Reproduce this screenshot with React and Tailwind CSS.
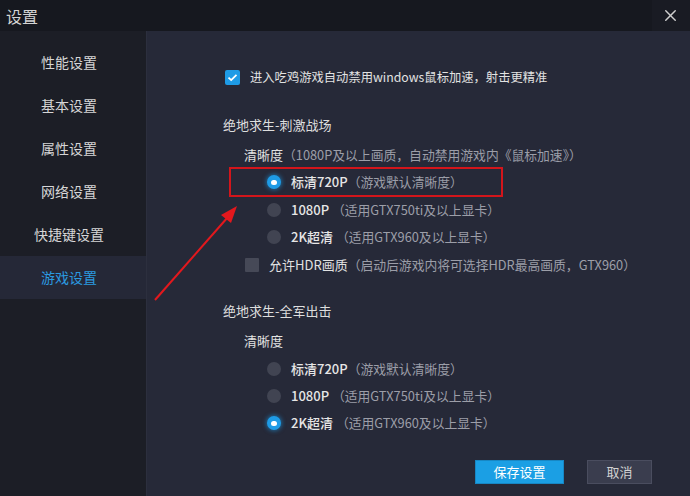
import React from "react";
import { X } from "lucide-react";

const font = { fontFamily: '"Noto Sans CJK SC", "Noto Sans", sans-serif' };

function Radio({ checked }) {
  if (checked) {
    return (
      <span className="w-[14px] h-[14px] rounded-full bg-[#1e9be6] flex items-center justify-center shadow-[0_0_4px_1px_rgba(30,155,230,0.55)] shrink-0">
        <span className="w-[6px] h-[5px] rounded-full bg-white" />
      </span>
    );
  }
  return <span className="w-[14px] h-[14px] rounded-full bg-[#414452] shrink-0" />;
}

function RadioRow({ checked, label, note, mt }) {
  return (
    <div className={`h-[20px] flex items-center pl-[44px] ${mt}`}>
      <Radio checked={checked} />
      <span className="ml-[10px] text-[13px] text-[#e6e6e6] font-medium">{label}</span>
      <span className="text-[12.8px] text-[#9c9ea8] whitespace-pre">{note}</span>
    </div>
  );
}

const SIDE = ["性能设置", "基本设置", "属性设置", "网络设置", "快捷键设置", "游戏设置"];

export default function App() {
  return (
    <div style={font} className="w-[690px] h-[496px] flex flex-col bg-[#262938] overflow-hidden relative">
      {/* title bar */}
      <div className="h-[31px] bg-[#16181f] flex items-center justify-between shrink-0">
        <span className="pl-[6px] text-[16px] text-[#d4d4d4]">设置</span>
        <div className="h-[31px] w-[38px] flex items-center justify-center bg-[#191b23] pr-[2px]">
          <X size={19} strokeWidth={1.8} color="#cfcfcf" />
        </div>
      </div>
      <div className="flex flex-1">
        {/* sidebar */}
        <div className="w-[146px] bg-[#1c1e26] pt-[10px] shrink-0">
          {SIDE.map((s, i) => (
            <div
              key={s}
              className={
                i === 5
                  ? "h-[43px] flex items-center justify-center pr-[8px] text-[14px] text-[#2b9ae0] bg-[#252837]"
                  : "h-[43px] flex items-center justify-center pr-[8px] text-[14px] text-[#d6d6d6]"
              }
            >
              {s}
            </div>
          ))}
        </div>
        {/* content */}
        <div className="flex-1 relative pl-[76px] border-l border-[#2c2f3e]">
          <div className="h-[20px] mt-[36px] flex items-center pl-[2px]">
            <span className="w-[15px] h-[15px] bg-[#1e9be6] rounded-[2px] flex items-center justify-center">
              <svg width="11" height="9" viewBox="0 0 11 9">
                <path d="M1.5 4.6 L4.2 7.1 L9.5 1.8" fill="none" stroke="white" strokeWidth="1.8" />
              </svg>
            </span>
            <span className="ml-[10px] text-[12.3px] text-[#e2e2e2]">进入吃鸡游戏自动禁用windows鼠标加速，射击更精准</span>
          </div>

          <div className="h-[20px] mt-[28px] flex items-center text-[13px] text-[#dedede]">绝地求生-刺激战场</div>
          <div className="h-[20px] mt-[10px] flex items-center pl-[21px]">
            <span className="text-[13px] text-[#e2e2e2]">清晰度</span>
            <span className="text-[12.8px] text-[#9c9ea8]">（1080P及以上画质，自动禁用游戏内《鼠标加速》）</span>
          </div>
          <RadioRow mt="mt-[7px]" checked label="标清720P" note="（游戏默认清晰度）" />
          <RadioRow mt="mt-[8px]" label="1080P" note=" （适用GTX750ti及以上显卡）" />
          <RadioRow mt="mt-[7px]" label="2K超清" note=" （适用GTX960及以上显卡）" />
          <div className="h-[20px] mt-[8px] flex items-center pl-[22px]">
            <span className="w-[14px] h-[14px] bg-[#464957] rounded-[1px] shrink-0" />
            <span className="ml-[10px] text-[13px] text-[#e2e2e2]">允许HDR画质</span>
            <span className="text-[12.8px] text-[#9c9ea8]">（启动后游戏内将可选择HDR最高画质，GTX960）</span>
          </div>

          <div className="h-[20px] mt-[26px] flex items-center text-[13px] text-[#dedede]">绝地求生-全军出击</div>
          <div className="h-[20px] mt-[10px] flex items-center pl-[21px]">
            <span className="text-[13px] text-[#e2e2e2]">清晰度</span>
          </div>
          <RadioRow mt="mt-[8px]" label="标清720P" note="（游戏默认清晰度）" />
          <RadioRow mt="mt-[7px]" label="1080P" note=" （适用GTX750ti及以上显卡）" />
          <RadioRow mt="mt-[7px]" checked label="2K超清" note=" （适用GTX960及以上显卡）" />

          <div className="mt-[27px] flex pl-[252px] gap-[23px]">
            <button className="w-[89px] h-[24px] bg-[#1b9fe4] border border-[#1787c4] text-[13px] text-white flex items-center justify-center">保存设置</button>
            <button className="w-[65px] h-[24px] bg-[#3a3d4e] border border-[#4a4d5f] text-[13px] text-[#d2d2d2] flex items-center justify-center">取消</button>
          </div>

          {/* red highlight box */}
          <div className="absolute left-[82px] top-[136px] w-[274px] h-[30px] border-2 border-[#d3151b] pointer-events-none" />
        </div>
      </div>

      {/* annotation arrow */}
      <svg className="absolute left-0 top-0 pointer-events-none" width="690" height="496">
        <line x1="155" y1="300" x2="228" y2="217" stroke="#e3181d" strokeWidth="2" />
        <polygon points="237,206 231,223 221,215" fill="#e3181d" />
      </svg>
    </div>
  );
}
